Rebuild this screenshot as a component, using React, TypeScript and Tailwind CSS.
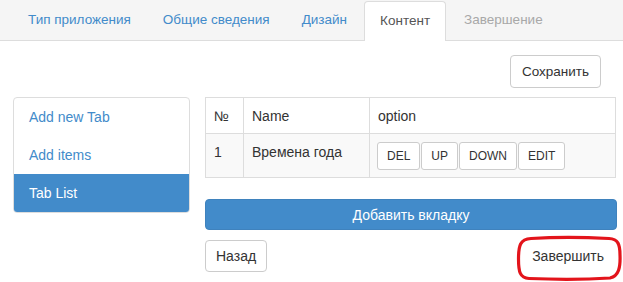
import React from "react";

const tabs = [
  { label: "Тип приложения", kind: "link" },
  { label: "Общие сведения", kind: "link" },
  { label: "Дизайн", kind: "link" },
  { label: "Контент", kind: "active" },
  { label: "Завершение", kind: "disabled" },
];

export default function App() {
  return (
    <div className="relative w-[623px] h-[282px] overflow-hidden bg-white text-[14px] leading-[20px] text-[#333] font-['Liberation_Sans',Arial,sans-serif]">
      {/* Tab bar */}
      <div className="flex items-end h-[41px] bg-[#f5f5f5] border-b border-[#ddd] pl-[13px] text-[13.5px]">
        {tabs.map((t) =>
          t.kind === "active" ? (
            <div
              key={t.label}
              className="h-[40px] -mb-px px-[15px] pt-[9px] mr-[3px] bg-white border border-[#ddd] border-b-0 rounded-t-[4px] text-[#555]"
            >
              {t.label}
            </div>
          ) : (
            <div
              key={t.label}
              className={
                "h-[40px] px-[15px] pt-[10px] mr-[2px] " +
                (t.kind === "disabled" ? "text-[#a8a8a8]" : "text-[#428bca]")
              }
            >
              {t.label}
            </div>
          )
        )}
      </div>

      {/* Save */}
      <div className="flex justify-end pr-[22px] mt-[14px]">
        <button className="h-[33px] px-[11px] bg-white border border-[#ccc] rounded-[4px] text-[13.5px] text-[#333]">
          Сохранить
        </button>
      </div>

      {/* Main */}
      <div className="flex gap-[15px] pl-[13px] mt-[9px]">
        <div className="w-[177px] shrink-0 self-start border border-[#ddd] rounded-[4px] overflow-hidden">
          <div className="h-[38px] flex items-center px-[15px] text-[#428bca]">Add new Tab</div>
          <div className="h-[38px] flex items-center px-[15px] text-[#428bca]">Add items</div>
          <div className="h-[38px] flex items-center px-[15px] bg-[#428bca] text-white">Tab List</div>
        </div>

        <div className="w-[411px] shrink-0">
          <table className="w-full border-collapse border border-[#ddd]">
            <thead>
              <tr className="h-[36px]">
                <th className="w-[38px] border border-[#ddd] px-[8px] text-left font-normal">№</th>
                <th className="w-[126px] border border-[#ddd] px-[8px] text-left font-normal">Name</th>
                <th className="border border-[#ddd] px-[8px] text-left font-normal">option</th>
              </tr>
            </thead>
            <tbody>
              <tr className="h-[44px] bg-[#f9f9f9]">
                <td className="border border-[#ddd] px-[8px] pt-[8px] pb-[6px] align-top">1</td>
                <td className="border border-[#ddd] px-[8px] pt-[8px] pb-[6px] align-top">Времена года</td>
                <td className="border border-[#ddd] px-[7px] pt-[8px] pb-[6px] align-top">
                  <div className="flex gap-[1px]">
                    {["DEL", "UP", "DOWN", "EDIT"].map((b) => (
                      <button
                        key={b}
                        className="h-[28px] px-[9px] bg-white border border-[#ccc] rounded-[3px] text-[12px] leading-[18px] text-[#333]"
                      >
                        {b}
                      </button>
                    ))}
                  </div>
                </td>
              </tr>
            </tbody>
          </table>

          <button className="mt-[21px] w-[412px] h-[31px] bg-[#428bca] border border-[#3f82bd] rounded-[4px] text-white">
            Добавить вкладку
          </button>

          <div className="flex justify-between mt-[10px]">
            <button className="h-[32px] px-[10px] bg-white border border-[#ccc] rounded-[4px] text-[#333]">
              Назад
            </button>
            <button className="h-[32px] px-[12px] bg-white border border-white rounded-[4px] text-[#333] mr-[-1px]">
              Завершить
            </button>
          </div>
        </div>
      </div>

      {/* Red annotation */}
      <svg
        className="absolute left-[515px] top-[235px]"
        width="108"
        height="47"
        viewBox="0 0 108 47"
      >
        <path
          d="M16 3.5 C 40 2, 75 2.5, 94 3.5 C 103 4, 105 9, 105 20 C 105.5 32, 104 41, 95 43 C 72 44.5, 38 44.5, 14 43.5 C 5 43, 3.5 37, 3.5 24 C 3.5 11, 5 4, 16 3.5 Z"
          fill="none"
          stroke="#e3141b"
          strokeWidth="3.2"
        />
      </svg>
    </div>
  );
}
